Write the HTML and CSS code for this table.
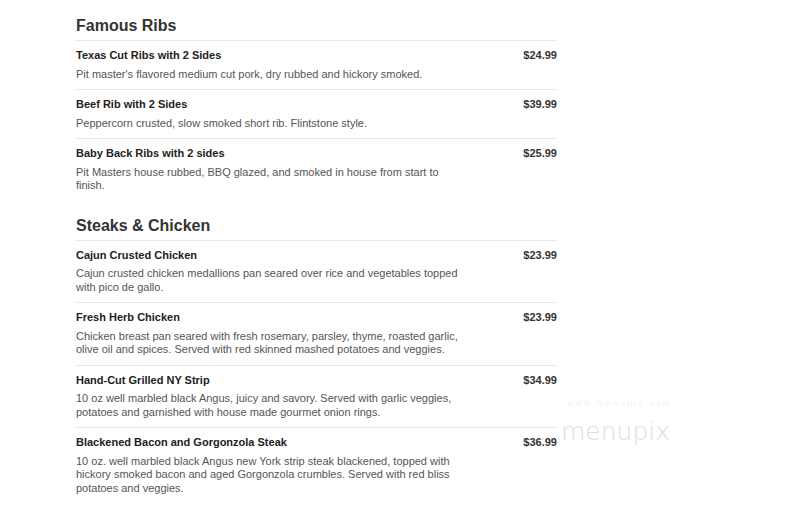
FILE: index.html
```html
<!DOCTYPE html>
<html>
<head>
<meta charset="utf-8">
<link rel="stylesheet" href="styles.css">
</head>
<body>
<div class="menu">
  <section class="section">
    <h2 class="section-title">Famous Ribs</h2>
    <div class="item">
      <div class="item-text">
        <div class="item-name">Texas Cut Ribs with 2 Sides</div>
        <div class="item-desc">Pit master's flavored medium cut pork, dry rubbed and hickory smoked.</div>
      </div>
      <div class="item-price">$24.99</div>
    </div>
    <div class="item">
      <div class="item-text">
        <div class="item-name">Beef Rib with 2 Sides</div>
        <div class="item-desc">Peppercorn crusted, slow smoked short rib. Flintstone style.</div>
      </div>
      <div class="item-price">$39.99</div>
    </div>
    <div class="item">
      <div class="item-text">
        <div class="item-name">Baby Back Ribs with 2 sides</div>
        <div class="item-desc">Pit Masters house rubbed, BBQ glazed, and smoked in house from start to finish.</div>
      </div>
      <div class="item-price">$25.99</div>
    </div>
  </section>
  <section class="section">
    <h2 class="section-title">Steaks &amp; Chicken</h2>
    <div class="item">
      <div class="item-text">
        <div class="item-name">Cajun Crusted Chicken</div>
        <div class="item-desc">Cajun crusted chicken medallions pan seared over rice and vegetables topped with pico de gallo.</div>
      </div>
      <div class="item-price">$23.99</div>
    </div>
    <div class="item">
      <div class="item-text">
        <div class="item-name">Fresh Herb Chicken</div>
        <div class="item-desc">Chicken breast pan seared with fresh rosemary, parsley, thyme, roasted garlic, olive oil and spices. Served with red skinned mashed potatoes and veggies.</div>
      </div>
      <div class="item-price">$23.99</div>
    </div>
    <div class="item">
      <div class="item-text">
        <div class="item-name">Hand-Cut Grilled NY Strip</div>
        <div class="item-desc">10 oz well marbled black Angus, juicy and savory. Served with garlic veggies, potatoes and garnished with house made gourmet onion rings.</div>
      </div>
      <div class="item-price">$34.99</div>
    </div>
    <div class="item">
      <div class="item-text">
        <div class="item-name">Blackened Bacon and Gorgonzola Steak</div>
        <div class="item-desc">10 oz. well marbled black Angus new York strip steak blackened, topped with hickory smoked bacon and aged Gorgonzola crumbles. Served with red bliss potatoes and veggies.</div>
      </div>
      <div class="item-price">$36.99</div>
    </div>
  </section>
</div>
<div class="watermark">
  <div class="watermark-url">www.menupix.com</div>
  <div class="watermark-logo">menupix</div>
</div>
</body>
</html>
```
FILE: styles.css
```css
html, body {
  margin: 0;
  padding: 0;
  background: #fff;
}
body {
  font-family: "Liberation Sans", Arial, sans-serif;
  color: #333;
  position: relative;
  min-height: 513px;
}
.menu {
  margin-left: 75px;
  width: 482px;
  padding-top: 1px;
}
.section-title {
  margin: 0;
  padding: 14px 0 3px 1px;
  font-size: 16px;
  line-height: 22px;
  font-weight: bold;
  color: #333;
}
.item {
  display: flex;
  justify-content: space-between;
  align-items: flex-start;
  border-top: 1px solid #e8e8e8;
  padding: 7px 0 8px 1px;
}
.item-text {
  max-width: 392px;
}
.item-name {
  font-size: 11px;
  line-height: 15px;
  font-weight: bold;
  color: #222;
}
.item-desc {
  margin-top: 4.5px;
  font-size: 11px;
  line-height: 13.5px;
  color: #555;
}
.item-price {
  font-size: 11px;
  line-height: 15px;
  font-weight: bold;
  color: #333;
}
.watermark {
  position: absolute;
  left: 561px;
  top: 398px;
}
.watermark-url {
  font-size: 9px;
  letter-spacing: 2px;
  margin-left: 6px;
  color: #f2f2f2;
}
.watermark-logo {
  font-family: "DejaVu Sans", sans-serif;
  font-weight: 200;
  font-size: 25px;
  line-height: 30px;
  color: #dedede;
  margin-top: 9px;
}
```
